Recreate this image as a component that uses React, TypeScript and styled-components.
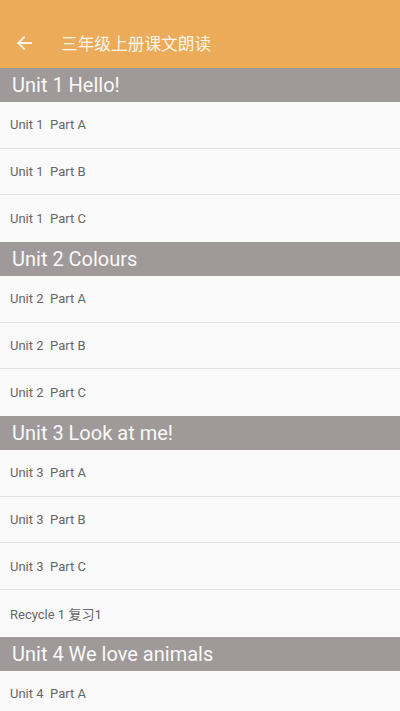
import React from 'react';
import styled, { createGlobalStyle } from 'styled-components';

const GlobalStyle = createGlobalStyle`
  html, body {
    margin: 0;
    padding: 0;
    background: #fafafa;
  }
  body {
    font-family: Roboto, "Noto Sans CJK SC", sans-serif;
  }
`;

interface Section {
  title: string;
  items: string[];
}

const sections: Section[] = [
  { title: 'Unit 1 Hello!', items: ['Unit 1  Part A', 'Unit 1  Part B', 'Unit 1  Part C'] },
  { title: 'Unit 2 Colours', items: ['Unit 2  Part A', 'Unit 2  Part B', 'Unit 2  Part C'] },
  {
    title: 'Unit 3 Look at me!',
    items: ['Unit 3  Part A', 'Unit 3  Part B', 'Unit 3  Part C', 'Recycle 1 复习1'],
  },
  { title: 'Unit 4 We love animals', items: ['Unit 4  Part A'] },
];

const Screen = styled.div`
  width: 400px;
  height: 711px;
  overflow: hidden;
  display: flex;
  flex-direction: column;
  background: #fafafa;
`;

const AppBar = styled.div`
  height: 68px;
  flex-shrink: 0;
  background: #ebab58;
  display: flex;
  align-items: flex-end;
  box-sizing: border-box;
  padding-bottom: 3px;
`;

const Toolbar = styled.div`
  height: 44px;
  display: flex;
  align-items: center;
`;

const BackButton = styled.div`
  width: 48px;
  height: 44px;
  display: flex;
  align-items: center;
  justify-content: center;
`;

const Title = styled.div`
  margin-left: 13px;
  color: #fdf5e8;
  font-size: 16.7px;
  font-family: "Noto Sans CJK SC", sans-serif;
`;

const List = styled.div`
  display: flex;
  flex-direction: column;
`;

const SectionHeader = styled.div`
  height: 34px;
  flex-shrink: 0;
  background: #9f9999;
  color: #f9f9f9;
  font-size: 20px;
  display: flex;
  align-items: center;
  padding-left: 12px;
  box-sizing: border-box;
`;

const Row = styled.div<{ last: boolean }>`
  height: 46.67px;
  flex-shrink: 0;
  box-sizing: border-box;
  display: flex;
  align-items: center;
  padding-left: 10px;
  font-size: 13px;
  color: #666;
  white-space: pre;
  background: #fafafa;
  border-bottom: ${({ last }) => (last ? 'none' : '1px solid #e2e2e2')};
`;

const App: React.FC = () => {
  return (
    <Screen>
      <GlobalStyle />
      <AppBar>
        <Toolbar>
          <BackButton>
            <svg width="16" height="16" viewBox="0 0 16 16" fill="none">
              <path
                d="M15 8H2.5M8 2.3L2.3 8 8 13.7"
                stroke="#fdf5e8"
                strokeWidth="1.9"
                strokeLinecap="square"
              />
            </svg>
          </BackButton>
          <Title>三年级上册课文朗读</Title>
        </Toolbar>
      </AppBar>
      <List>
        {sections.map((s) => (
          <React.Fragment key={s.title}>
            <SectionHeader>{s.title}</SectionHeader>
            {s.items.map((item, i) => (
              <Row key={item} last={i === s.items.length - 1}>
                {item}
              </Row>
            ))}
          </React.Fragment>
        ))}
      </List>
    </Screen>
  );
};

export default App;
